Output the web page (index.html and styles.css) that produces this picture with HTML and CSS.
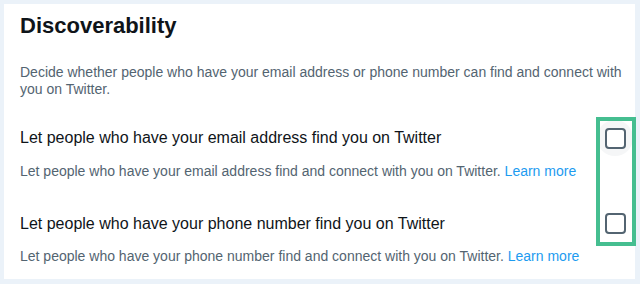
FILE: index.html
```html
<!DOCTYPE html>
<html lang="en">
<head>
<meta charset="utf-8">
<title>Discoverability</title>
<link rel="stylesheet" href="styles.css">
</head>
<body>
<main class="panel">
  <h2 class="title">Discoverability</h2>
  <p class="intro">Decide whether people who have your email address or phone number can find and connect with you on Twitter.</p>
  <div class="option option-first">
    <div class="option-text">
      <div class="option-title">Let people who have your email address find you on Twitter</div>
      <div class="option-desc">Let people who have your email address find and connect with you on Twitter. <a class="link" href="#">Learn more</a></div>
    </div>
    <span class="check-wrap check-wrap-hover"><span class="check"></span></span>
  </div>
  <div class="option option-second">
    <div class="option-text">
      <div class="option-title">Let people who have your phone number find you on Twitter</div>
      <div class="option-desc option-desc-second">Let people who have your phone number find and connect with you on Twitter. <a class="link" href="#">Learn more</a></div>
    </div>
    <span class="check-wrap"><span class="check"></span></span>
  </div>
  <div class="highlight"></div>
</main>
</body>
</html>
```

FILE: styles.css
```css
html, body {
  margin: 0;
  padding: 0;
}
body {
  background: #ebf2f9;
  font-family: "Liberation Sans", Arial, sans-serif;
  color: #0f1419;
  width: 640px;
  height: 284px;
  overflow: hidden;
}
.panel {
  position: relative;
  margin: 4px 0 0 4px;
  width: 631px;
  height: 275px;
  background: #ffffff;
  box-sizing: border-box;
  padding: 9px 10px 0 16px;
}
.title {
  margin: 0;
  font-size: 22px;
  line-height: 26px;
  font-weight: 700;
}
.intro {
  margin: 25px 0 0 0;
  font-size: 14px;
  line-height: 17px;
  color: #536471;
}
.option {
  display: flex;
  align-items: flex-start;
  justify-content: space-between;
}
.option-first {
  margin-top: 30px;
}
.option-second {
  margin-top: 34px;
}
.option-title {
  font-size: 16px;
  line-height: 20px;
}
.option-desc {
  margin-top: 15px;
  font-size: 14px;
  line-height: 17px;
  color: #536471;
}
.option-desc-second {
  margin-top: 14px;
}
.link {
  color: #1d9bf0;
  text-decoration: none;
}
.check-wrap {
  flex: none;
  display: flex;
  align-items: center;
  justify-content: center;
  width: 36px;
  height: 36px;
  margin: -8px -8px 0 0;
  border-radius: 50%;
}
.check-wrap-hover {
  background: #f5f6f7;
}
.option-second .check-wrap {
  margin-top: -9px;
}
.check {
  display: block;
  width: 21px;
  height: 21px;
  box-sizing: border-box;
  border: 2px solid #536471;
  border-radius: 4px;
  background: #fff;
}
.highlight {
  position: absolute;
  left: 592px;
  top: 113px;
  width: 40px;
  height: 129px;
  box-sizing: border-box;
  border: 4px solid #45be90;
}
```
